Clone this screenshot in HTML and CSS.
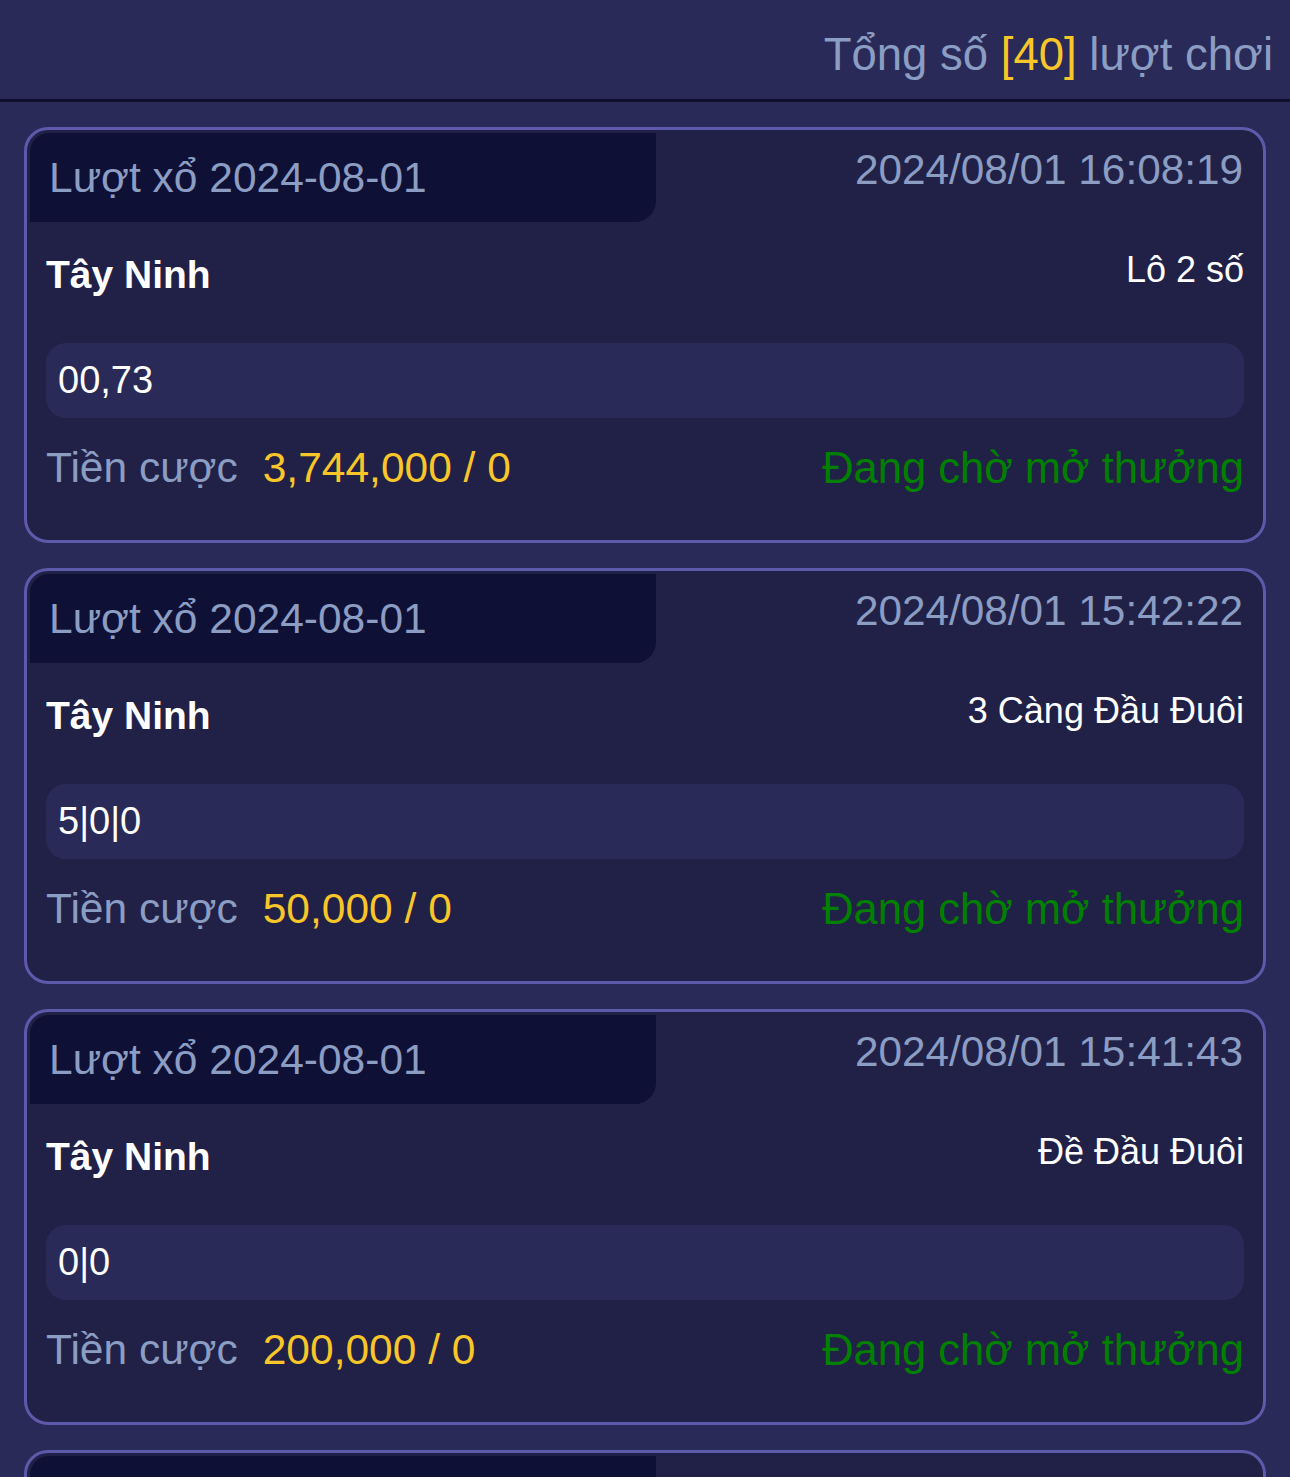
FILE: index.html
```html
<!DOCTYPE html>
<html lang="vi">
<head>
  <meta charset="UTF-8">
  <meta name="viewport" content="width=device-width, initial-scale=1.0">
  <title>Lịch sử cược</title>
  <link rel="stylesheet" href="styles.css">
</head>
<body>
  <div class="summary">Tổng số <span class="count">[40]</span> lượt chơi</div>

  <div class="list">
    <div class="card">
      <div class="card-head">
        <div class="draw">Lượt xổ 2024-08-01</div>
        <div class="time">2024/08/01 16:08:19</div>
      </div>
      <div class="card-body">
        <div class="row-name">
          <span class="region">Tây Ninh</span>
          <span class="type">Lô 2 số</span>
        </div>
        <div class="numbers">00,73</div>
        <div class="row-bet">
          <span class="bet"><span class="label">Tiền cược</span><span class="amount">3,744,000 / 0</span></span>
          <span class="status">Đang chờ mở thưởng</span>
        </div>
      </div>
    </div>

    <div class="card">
      <div class="card-head">
        <div class="draw">Lượt xổ 2024-08-01</div>
        <div class="time">2024/08/01 15:42:22</div>
      </div>
      <div class="card-body">
        <div class="row-name">
          <span class="region">Tây Ninh</span>
          <span class="type">3 Càng Đầu Đuôi</span>
        </div>
        <div class="numbers">5|0|0</div>
        <div class="row-bet">
          <span class="bet"><span class="label">Tiền cược</span><span class="amount">50,000 / 0</span></span>
          <span class="status">Đang chờ mở thưởng</span>
        </div>
      </div>
    </div>

    <div class="card">
      <div class="card-head">
        <div class="draw">Lượt xổ 2024-08-01</div>
        <div class="time">2024/08/01 15:41:43</div>
      </div>
      <div class="card-body">
        <div class="row-name">
          <span class="region">Tây Ninh</span>
          <span class="type">Đề Đầu Đuôi</span>
        </div>
        <div class="numbers">0|0</div>
        <div class="row-bet">
          <span class="bet"><span class="label">Tiền cược</span><span class="amount">200,000 / 0</span></span>
          <span class="status">Đang chờ mở thưởng</span>
        </div>
      </div>
    </div>

    <div class="card">
      <div class="card-head">
        <div class="draw"></div>
      </div>
    </div>
  </div>
</body>
</html>
```

FILE: styles.css
```css
body {
  font-family: "Liberation Sans", Arial, Helvetica, sans-serif;
  margin: 0;
  background-color: #292a57;
  color: #fff;
}
.summary {
  height: 89px;
  padding: 10px 17px 0 0;
  line-height: 89px;
  text-align: right;
  font-size: 45.5px;
  color: #8b9dc3;
  border-bottom: 3px solid #0f0f2e;
}
.count {
  color: #f9c62a;
}
.list {
  padding: 25px 24px;
  display: flex;
  flex-direction: column;
  gap: 25px;
}
.card {
  background-color: #212147;
  border: 3px solid #5e5aab;
  border-radius: 24px;
  padding: 3px 0 0 3px;
}
.card-head {
  display: flex;
  justify-content: space-between;
  align-items: flex-start;
  height: 89px;
}
.draw {
  width: 607px;
  height: 89px;
  padding-left: 19px;
  display: flex;
  align-items: center;
  background-color: #0f1035;
  border-radius: 19px 0 21px 0;
  font-size: 42.5px;
  line-height: 50px;
  color: #8b9dc3;
}
.time {
  padding: 12px 20px 0 0;
  font-size: 42.3px;
  line-height: 50px;
  color: #8b9dc3;
}
.card-body {
  padding: 0 19px 47px 16px;
}
.row-name {
  display: flex;
  justify-content: space-between;
  align-items: flex-start;
  margin-top: 28px;
  height: 50px;
}
.region {
  font-size: 39px;
  font-weight: bold;
  line-height: 50px;
}
.type {
  font-size: 36px;
  line-height: 40px;
}
.numbers {
  margin-top: 43px;
  height: 75px;
  line-height: 75px;
  padding-left: 12px;
  background-color: #292a57;
  border-radius: 20px;
  font-size: 38px;
}
.row-bet {
  display: flex;
  justify-content: space-between;
  margin-top: 25px;
  height: 50px;
  line-height: 50px;
  font-size: 42.5px;
}
.label {
  color: #8b9dc3;
  margin-right: 25px;
}
.amount {
  color: #f9c62a;
}
.status {
  font-size: 43.5px;
  color: #008000;
}
```
